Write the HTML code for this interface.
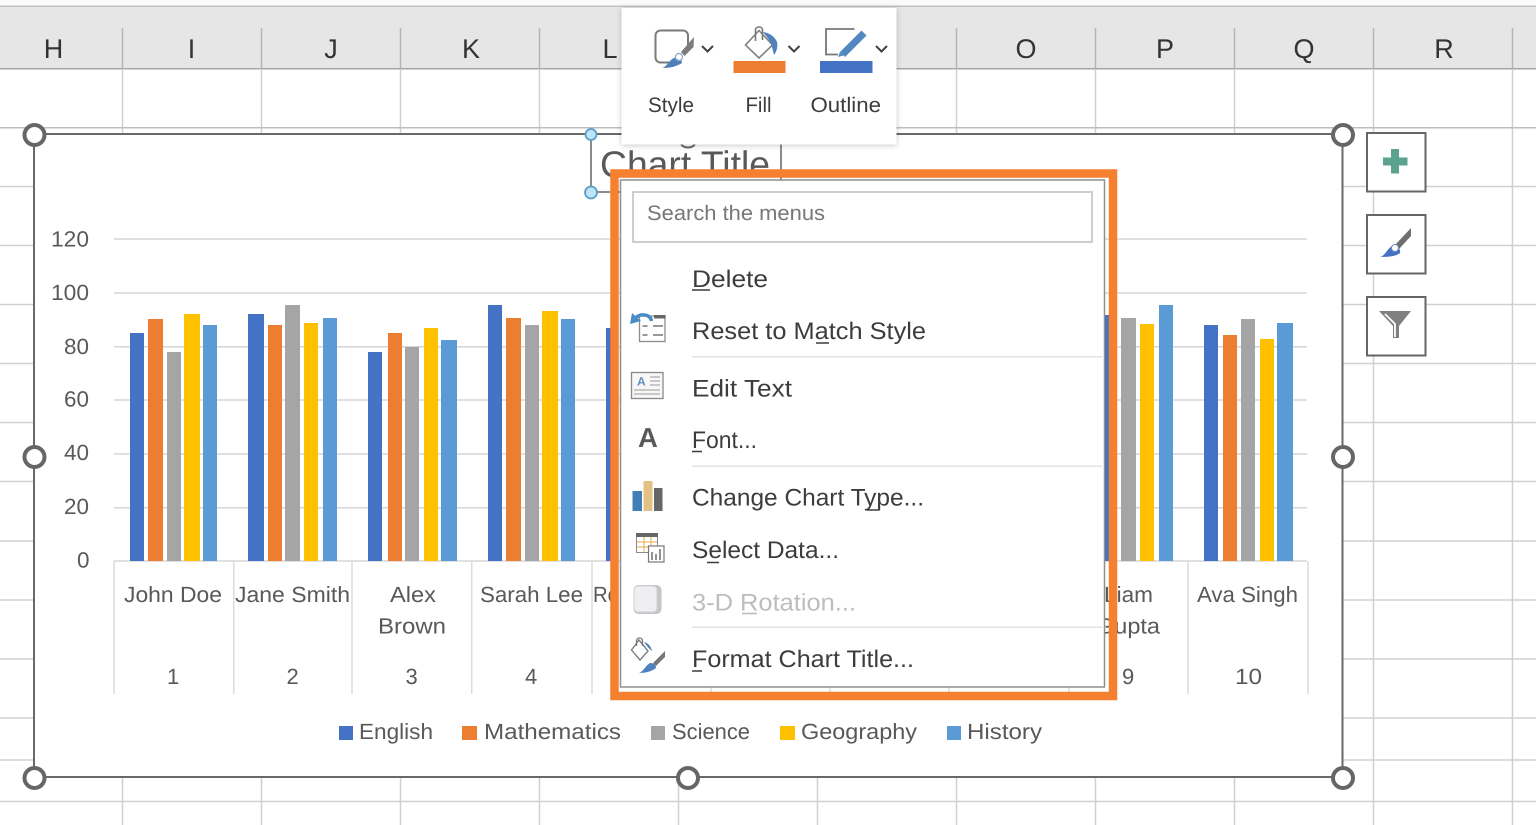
<!DOCTYPE html>
<html lang="en"><head><meta charset="utf-8"><title>Excel chart title context menu</title>
<style>
html,body{margin:0;padding:0;background:#fff;width:1536px;height:825px;overflow:hidden}
svg{display:block}
text{font-family:"Liberation Sans",sans-serif;text-rendering:geometricPrecision}
.h{font-size:27px;fill:#333;text-anchor:middle}
.a{font-size:22px;fill:#595959}
.m{font-size:24px;fill:#3c3c3c}
.t{font-size:21px;fill:#3c3c3c}
.u{stroke:#3c3c3c;stroke-width:1.6}
.g{stroke:#d6d6d6;stroke-width:1.5}
.v{stroke:#d0d0d0;stroke-width:1.5}
.hv{stroke:#b4b4b4;stroke-width:1.5}
.c{stroke:#dcdcdc;stroke-width:1.5}
.hd{fill:#fff;stroke:#666;stroke-width:4}
.B{fill:#4472c4}.O{fill:#ed7d31}.S{fill:#a5a5a5}.Y{fill:#ffc000}.L{fill:#5b9bd5}
</style></head>
<body>
<svg width="1536" height="825" viewBox="0 0 1536 825" xmlns="http://www.w3.org/2000/svg">
<defs>
<filter id="sh" x="-10%" y="-10%" width="120%" height="120%"><feDropShadow dx="0" dy="1" stdDeviation="3" flood-color="#000" flood-opacity=".22"/></filter>
</defs>
<rect width="1536" height="825" fill="#fff"/>
<rect y="0" width="1536" height="6" fill="#fafafa"/>
<!-- header -->
<rect y="6" width="1536" height="62.5" fill="#e6e6e6"/>
<rect y="5.5" width="1536" height="1.5" fill="#c2c2c2"/>
<rect y="68" width="1536" height="1.5" fill="#a6a6a6"/>
<g class="hv">
<path d="M122.500 28V68M261.500 28V68M400.500 28V68M539.500 28V68M956.500 28V68M1095.500 28V68M1234.500 28V68M1373.500 28V68M1512.500 28V68"/>
</g>
<text class="h" x="53.500" y="58">H</text><text class="h" x="191.500" y="58">I</text><text class="h" x="331" y="58">J</text><text class="h" x="471" y="58">K</text><text class="h" x="610" y="58">L</text><text class="h" x="1026" y="58">O</text><text class="h" x="1165" y="58">P</text><text class="h" x="1304" y="58">Q</text><text class="h" x="1444" y="58">R</text>
<!-- sheet grid -->
<g class="v">
<path d="M122.500 69V825M261.500 69V825M400.500 69V825M539.500 69V825M678.500 69V825M817.500 69V825M956.500 69V825M1095.500 69V825M1234.500 69V825M1373.500 69V825M1512.500 69V825"/>
<path d="M0 186.500H1536M0 245.500H1536M0 304.500H1536M0 363.500H1536M0 422.500H1536M0 481.500H1536M0 541H1536M0 600H1536M0 659H1536M0 718H1536M0 760H1536M0 801.500H1536"/>
</g>
<rect y="127" width="1536" height="1.500" fill="#bdbdbd"/>
<!-- chart area -->
<rect x="34" y="134" width="1308.500" height="643" fill="#fff" stroke="#696969" stroke-width="2"/>
<g class="g">
<path d="M114 239H1307M114 293H1307M114 346.700H1307M114 400H1307M114 454H1307M114 507.700H1307M114 561H1307"/>
</g>
<g class="c">
<path d="M114 561V694M233.700 561V694M352 561V694M471.700 561V694M592 561V694M711 561V694M830 561V694M949 561V694M1069 561V694M1188 561V694M1308 561V694"/>
</g>
<!-- bars -->
<rect class="B" x="130" y="333" width="14" height="228"/><rect class="O" x="148" y="319" width="15" height="242"/><rect class="S" x="167" y="352" width="14" height="209"/><rect class="Y" x="184" y="314" width="16" height="247"/><rect class="L" x="203" y="325" width="14" height="236"/>
<rect class="B" x="248" y="314" width="16" height="247"/><rect class="O" x="268" y="325" width="14" height="236"/><rect class="S" x="285" y="305" width="15" height="256"/><rect class="Y" x="304" y="323" width="14" height="238"/><rect class="L" x="323" y="318" width="14" height="243"/>
<rect class="B" x="368" y="352" width="14" height="209"/><rect class="O" x="388" y="333" width="14" height="228"/><rect class="S" x="405" y="347" width="14" height="214"/><rect class="Y" x="424" y="328" width="14" height="233"/><rect class="L" x="441" y="340" width="16" height="221"/>
<rect class="B" x="488" y="305" width="14" height="256"/><rect class="O" x="506" y="318" width="15" height="243"/><rect class="S" x="525" y="325" width="14" height="236"/><rect class="Y" x="542" y="311" width="16" height="250"/><rect class="L" x="561" y="319" width="14" height="242"/>
<rect class="B" x="606" y="328" width="8" height="233"/>
<rect class="B" x="1100" y="315" width="12" height="246"/>
<rect class="S" x="1121" y="318" width="15" height="243"/><rect class="Y" x="1140" y="324" width="14" height="237"/><rect class="L" x="1159" y="305" width="14" height="256"/>
<rect class="B" x="1204" y="325" width="14" height="236"/><rect class="O" x="1223" y="335" width="14" height="226"/><rect class="S" x="1241" y="319" width="14" height="242"/><rect class="Y" x="1260" y="339" width="14" height="222"/><rect class="L" x="1277" y="323" width="16" height="238"/>
<!-- axis labels -->
<text class="a" x="51" y="246.500" textLength="38" lengthAdjust="spacingAndGlyphs">120</text>
<text class="a" x="51" y="300" textLength="38" lengthAdjust="spacingAndGlyphs">100</text>
<text class="a" x="64" y="354" textLength="25" lengthAdjust="spacingAndGlyphs">80</text>
<text class="a" x="64" y="406.500" textLength="25" lengthAdjust="spacingAndGlyphs">60</text>
<text class="a" x="64" y="460" textLength="25" lengthAdjust="spacingAndGlyphs">40</text>
<text class="a" x="64" y="514" textLength="25" lengthAdjust="spacingAndGlyphs">20</text>
<text class="a" x="77" y="567.500" textLength="12.500" lengthAdjust="spacingAndGlyphs">0</text>
<text class="a" x="124" y="602" textLength="98" lengthAdjust="spacingAndGlyphs">John Doe</text>
<text class="a" x="235" y="602" textLength="115" lengthAdjust="spacingAndGlyphs">Jane Smith</text>
<text class="a" x="390" y="602" textLength="46" lengthAdjust="spacingAndGlyphs">Alex</text>
<text class="a" x="378" y="633.500" textLength="68" lengthAdjust="spacingAndGlyphs">Brown</text>
<text class="a" x="480" y="602" textLength="103" lengthAdjust="spacingAndGlyphs">Sarah Lee</text>
<text class="a" x="593" y="602" textLength="26" lengthAdjust="spacingAndGlyphs">Ro</text>
<text class="a" x="1104" y="602" textLength="49" lengthAdjust="spacingAndGlyphs">Liam</text>
<text class="a" x="1096" y="633.500" textLength="64" lengthAdjust="spacingAndGlyphs">Gupta</text>
<text class="a" x="1197" y="602" textLength="101" lengthAdjust="spacingAndGlyphs">Ava Singh</text>
<text class="a" x="167" y="684">1</text><text class="a" x="286.500" y="684">2</text><text class="a" x="405.500" y="684">3</text><text class="a" x="525" y="684">4</text><text class="a" x="1122" y="684">9</text>
<text class="a" x="1235" y="684" textLength="27" lengthAdjust="spacingAndGlyphs">10</text>
<!-- legend -->
<rect class="B" x="339" y="726" width="14" height="14"/><text class="a" x="359" y="739" textLength="74" lengthAdjust="spacingAndGlyphs">English</text>
<rect class="O" x="462" y="726" width="15" height="14"/><text class="a" x="484" y="739" textLength="137" lengthAdjust="spacingAndGlyphs">Mathematics</text>
<rect class="S" x="651" y="726" width="14" height="14"/><text class="a" x="672" y="739" textLength="78" lengthAdjust="spacingAndGlyphs">Science</text>
<rect class="Y" x="780" y="726" width="15" height="14"/><text class="a" x="801" y="739" textLength="116" lengthAdjust="spacingAndGlyphs">Geography</text>
<rect class="L" x="947" y="726" width="14" height="14"/><text class="a" x="967" y="739" textLength="75" lengthAdjust="spacingAndGlyphs">History</text>
<!-- chart title and selection -->
<text x="600" y="177" font-size="37" fill="#595959" textLength="170" lengthAdjust="spacingAndGlyphs">Chart Title</text>
<path d="M591 134V192H620M781 140V180" fill="none" stroke="#666" stroke-width="1.500"/>
<circle cx="591" cy="134.500" r="5.500" fill="#bfe3f7" stroke="#5b9fc9" stroke-width="1.800"/>
<circle cx="591" cy="192.500" r="6" fill="#bfe3f7" stroke="#5b9fc9" stroke-width="1.800"/>
<ellipse cx="688" cy="143" rx="7" ry="4.500" fill="#fff" stroke="#666" stroke-width="2"/>
<!-- handles -->
<circle class="hd" cx="34.500" cy="135" r="10"/><circle class="hd" cx="1343" cy="135" r="10"/>
<circle class="hd" cx="34.500" cy="457" r="10"/><circle class="hd" cx="1343" cy="457" r="10"/>
<circle class="hd" cx="34.500" cy="778" r="10"/><circle class="hd" cx="688" cy="778" r="10"/><circle class="hd" cx="1343" cy="778" r="10"/>
<!-- side buttons -->
<g fill="#fff" stroke="#666" stroke-width="2">
<rect x="1367" y="133" width="58.500" height="58.500"/>
<rect x="1367" y="215" width="58.500" height="58.500"/>
<rect x="1367" y="297" width="58.500" height="58.500"/>
</g>
<path d="M1391 149h8v8.500h8.500v8h-8.500v8h-8v-8h-8v-8h8z" fill="#5ba28f"/>
<path d="M1411 228L1395 245 1399 249 1411 236z" fill="#6f6f6f"/>
<path d="M1380 257c5-1 7-8 12-11 5-1 9 3 8 7-4 3-9 4-20 4z" fill="#4472c4"/>
<circle cx="1395" cy="248" r="3.500" fill="#fff" stroke="#6f8fc0" stroke-width="1"/>
<path d="M1379 311h32l-12 15v12h-6v-12z" fill="#808080"/>
<path d="M1385 314l10 10v13" fill="none" stroke="#fff" stroke-width="1.800"/>
<!-- toolbar -->
<rect x="621.500" y="8" width="275" height="136.500" fill="#fff" filter="url(#sh)"/>
<rect x="655.500" y="30.500" width="32.500" height="32" rx="5" fill="none" stroke="#7a7a7a" stroke-width="2"/>
<path d="M674 66L697 34V66z" fill="#fff"/>
<path d="M694 37L681 52 684.500 56 693.500 47z" fill="#7b7b7b"/>
<path d="M662 68c5-1 7-8 12-10 5-1 8 2 8 5-5 3-10 5-20 5z" fill="#4f7fb8"/>
<circle cx="679" cy="57" r="3.500" fill="#fff" stroke="#8aa4c6" stroke-width="1.200"/>
<path d="M702 46l5.500 5.500L713 46" fill="none" stroke="#404040" stroke-width="2"/>
<path d="M759 30.500L772.500 45 759 58 745.500 45z" fill="#fff" stroke="#828282" stroke-width="1.600"/>
<path d="M755.500 41V30c0-4 7-4 7 0v10" fill="none" stroke="#777" stroke-width="1.600"/>
<path d="M763 32c7 1 12 5 14 10 1 4 0 9-3 13-1-4-2-8-3-11-2-5-5-8-8-12z" fill="#4f81bd"/>
<rect x="733.500" y="61" width="52" height="12" fill="#ed7d31"/>
<path d="M788.500 46l5.500 5.500 5.500-5.500" fill="none" stroke="#404040" stroke-width="2"/>
<path d="M854.500 29H826V54.500H838" fill="none" stroke="#777" stroke-width="1.800"/>
<path d="M861.500 30.500l5 5L845 57l-5-5z" fill="#5288c0"/>
<path d="M838 57l2-5 3.500 3.500z" fill="#5288c0"/>
<rect x="820" y="61" width="52.500" height="12" fill="#4472c4"/>
<path d="M876 46l5.500 5.500L887 46" fill="none" stroke="#404040" stroke-width="2"/>
<text class="t" x="648" y="112" textLength="46" lengthAdjust="spacingAndGlyphs">Style</text>
<text class="t" x="745.500" y="112" textLength="26" lengthAdjust="spacingAndGlyphs">Fill</text>
<text class="t" x="810.500" y="112" textLength="70.500" lengthAdjust="spacingAndGlyphs">Outline</text>
<!-- menu -->
<rect x="620.500" y="180" width="484" height="507" fill="#fff" stroke="#8f8f8f" stroke-width="1.500"/>
<rect x="614.500" y="173.500" width="498.500" height="522.500" fill="none" stroke="#f58030" stroke-width="8.500"/>
<rect x="633" y="192" width="459" height="50" fill="#fff" stroke="#c9c9c9" stroke-width="1.800"/>
<text x="647" y="220" font-size="21" fill="#777" textLength="178" lengthAdjust="spacingAndGlyphs">Search the menus</text>
<g fill="#e2e2e2"><rect x="692" y="356" width="410" height="1.500"/><rect x="692" y="465.500" width="410" height="1.500"/><rect x="692" y="626.500" width="410" height="1.500"/></g>
<text class="m" x="692" y="287" textLength="76" lengthAdjust="spacingAndGlyphs">Delete</text>
<text class="m" x="692" y="339" textLength="234" lengthAdjust="spacingAndGlyphs">Reset to Match Style</text>
<text class="m" x="692" y="396.500" textLength="100" lengthAdjust="spacingAndGlyphs">Edit Text</text>
<text class="m" x="692" y="448" textLength="65" lengthAdjust="spacingAndGlyphs">Font...</text>
<text class="m" x="692" y="505.500" textLength="232" lengthAdjust="spacingAndGlyphs">Change Chart Type...</text>
<text class="m" x="692" y="558" textLength="147" lengthAdjust="spacingAndGlyphs">Select Data...</text>
<text class="m" x="692" y="610.500" textLength="164" lengthAdjust="spacingAndGlyphs" style="fill:#bdbdbd">3-D Rotation...</text>
<text class="m" x="692" y="667" textLength="222" lengthAdjust="spacingAndGlyphs">Format Chart Title...</text>
<g class="u">
<path d="M692 290H710M816 343H829M692 451.500H702M867 510H879M707 562.500H719M692 671H702"/>
<path d="M742 613.500H757" stroke="#bdbdbd"/>
</g>
<!-- reset icon -->
<rect x="639.500" y="316" width="25.500" height="25.500" fill="#fff" stroke="#8c8c8c" stroke-width="1.300"/>
<rect x="654" y="315" width="11.500" height="3.500" fill="#666"/>
<path d="M653 326h10M653 335h10M642.500 326h5M642.500 335h5" stroke="#777" stroke-width="1.500" fill="none"/>
<path d="M651.500 321c-1-7-11-8-16-3" fill="none" stroke="#4a8cc8" stroke-width="3.500"/>
<path d="M630 324l2-11 9 8z" fill="#4a8cc8"/>
<!-- edit text icon -->
<rect x="631.500" y="372.500" width="31.500" height="26" fill="#f7f7f7" stroke="#8a8a8a" stroke-width="1.300"/>
<text x="637" y="385.500" font-size="12" font-weight="700" fill="#5f8fc0">A</text>
<path d="M650 377h10M650 381h10M650 385h10M634 390h26M634 394h26" stroke="#999" stroke-width="1" fill="none"/>
<!-- font icon -->
<text x="638" y="447" font-size="27.500" font-weight="700" fill="#595959">A</text>
<!-- chart type icon -->
<rect x="632.500" y="491" width="9.500" height="20" fill="#3f7fb5"/>
<rect x="643.500" y="481" width="9" height="30" fill="#e3c184"/>
<rect x="654" y="488" width="8.500" height="23" fill="#666"/>
<!-- select data icon -->
<rect x="636.500" y="533.500" width="21" height="19" fill="#fff" stroke="#8a8a8a" stroke-width="1"/>
<rect x="636" y="533" width="22" height="4" fill="#666"/>
<path d="M637 542h20M637 547h20M644 537v15M651 537v15" stroke="#e9a94f" stroke-width="1" fill="none"/>
<rect x="648.500" y="546" width="15.500" height="16" fill="#fff" stroke="#777" stroke-width="1.200"/>
<path d="M652 552v8M656 554v6M660 549v11" stroke="#777" stroke-width="1.600" fill="none"/>
<!-- 3d icon -->
<rect x="633.500" y="585" width="28" height="29" rx="5" fill="#c5c5c5"/>
<rect x="634" y="586" width="23" height="26" rx="4" fill="#efeff3" stroke="#d2d2d2" stroke-width="1"/>
<!-- format icon -->
<path d="M639 640L648 651 640 660 631.500 650z" fill="#fff" stroke="#808080" stroke-width="1.400"/>
<path d="M636.500 646v-5c0-4 6-4 6 0v5" fill="none" stroke="#777" stroke-width="1.300"/>
<path d="M644 642c4 1 7 4 8 9-3-2-5-5-8-9z" fill="#4f81bd"/>
<path d="M665 651l-12 12 3 3 9-9z" fill="#777"/>
<path d="M639 673c4-1 7-8 11-10 4 0 6 2 6 5-4 3-9 5-17 5z" fill="#4f81bd"/>
</svg>
</body></html>
